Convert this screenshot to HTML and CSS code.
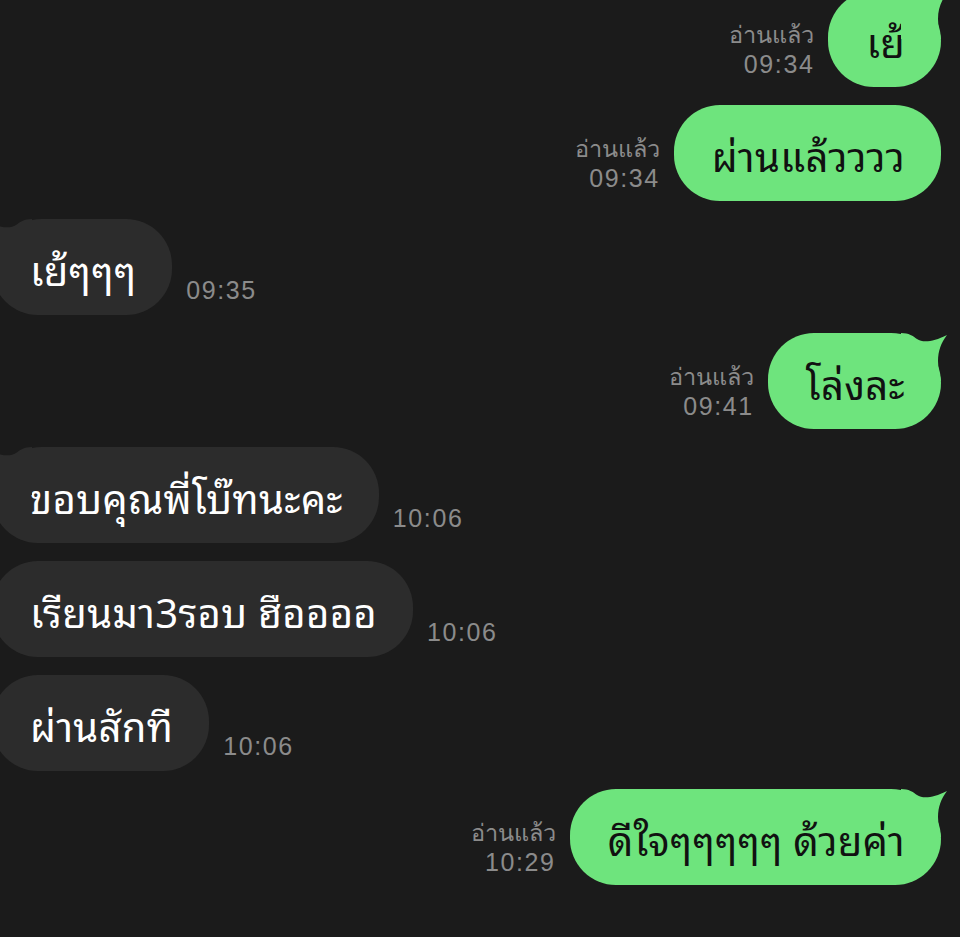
FILE: index.html
```html
<!DOCTYPE html>
<html lang="th">
<head>
<meta charset="utf-8">
<title>Chat</title>
<link rel="stylesheet" href="styles.css">
</head>
<body>
<div class="chat">
  <div class="row out first">
    <div class="meta"><span>อ่านแล้ว</span><span class="time">09:34</span></div>
    <div class="bubble tailed">เย้<svg class="tail" viewBox="0 0 48 48"><path d="M0,0 C8,0 12,3 16,6 C22,10 32,9 46,2 C40,10 37,18 37,28 C37,36 39,42 40,48 L0,48 Z"/></svg></div>
  </div>
  <div class="row out">
    <div class="meta"><span>อ่านแล้ว</span><span class="time">09:34</span></div>
    <div class="bubble">ผ่านแล้วววว</div>
  </div>
  <div class="row in">
    <div class="bubble tailed">เย้ๆๆๆ<svg class="tail" viewBox="0 0 48 48"><path d="M0,0 C8,0 12,3 16,6 C22,10 32,9 46,2 C40,10 37,18 37,28 C37,36 39,42 40,48 L0,48 Z"/></svg></div>
    <div class="meta"><span class="time">09:35</span></div>
  </div>
  <div class="row out">
    <div class="meta"><span>อ่านแล้ว</span><span class="time">09:41</span></div>
    <div class="bubble tailed">โล่งละ<svg class="tail" viewBox="0 0 48 48"><path d="M0,0 C8,0 12,3 16,6 C22,10 32,9 46,2 C40,10 37,18 37,28 C37,36 39,42 40,48 L0,48 Z"/></svg></div>
  </div>
  <div class="row in">
    <div class="bubble tailed">ขอบคุณพี่โบ๊ทนะคะ<svg class="tail" viewBox="0 0 48 48"><path d="M0,0 C8,0 12,3 16,6 C22,10 32,9 46,2 C40,10 37,18 37,28 C37,36 39,42 40,48 L0,48 Z"/></svg></div>
    <div class="meta"><span class="time">10:06</span></div>
  </div>
  <div class="row in">
    <div class="bubble">เรียนมา3รอบ ฮืออออ</div>
    <div class="meta"><span class="time">10:06</span></div>
  </div>
  <div class="row in">
    <div class="bubble">ผ่านสักที</div>
    <div class="meta"><span class="time">10:06</span></div>
  </div>
  <div class="row out">
    <div class="meta"><span>อ่านแล้ว</span><span class="time">10:29</span></div>
    <div class="bubble tailed">ดีใจๆๆๆๆๆ ด้วยค่า<svg class="tail" viewBox="0 0 48 48"><path d="M0,0 C8,0 12,3 16,6 C22,10 32,9 46,2 C40,10 37,18 37,28 C37,36 39,42 40,48 L0,48 Z"/></svg></div>
  </div>
</div>
</body>
</html>
```
FILE: styles.css
```css
html, body {
  margin: 0;
  padding: 0;
  background: #1b1b1b;
  height: 100%;
  overflow: hidden;
}
.chat {
  display: flex;
  flex-direction: column;
  gap: 18px;
  margin-top: -9px;
}
.row {
  display: flex;
  align-items: flex-end;
  gap: 14px;
}
.row.out {
  justify-content: flex-end;
  padding-right: 19px;
}
.row.in {
  justify-content: flex-start;
  margin-left: -8px;
}
.bubble {
  position: relative;
  height: 96px;
  display: flex;
  align-items: center;
  padding: 2px 36px 0 38px;
  box-sizing: border-box;
  border-radius: 46px;
  font-family: "Noto Sans Thai Looped", "Noto Sans Thai", "Noto Sans", sans-serif;
  font-size: 40px;
  letter-spacing: 0.3px;
  white-space: nowrap;
}
.out .bubble {
  background: #6ee47d;
  color: #111;
}
.in .bubble {
  background: #2c2c2c;
  color: #fff;
}
.out .bubble.tailed {
  border-top-right-radius: 50px;
}
.in .bubble.tailed {
  border-top-left-radius: 50px;
}
.tail {
  position: absolute;
  top: 0;
  width: 48px;
  height: 48px;
}
.out .tail {
  right: -8px;
  fill: #6ee47d;
}
.in .tail {
  left: -8px;
  fill: #2c2c2c;
  transform: scaleX(-1);
}
.meta {
  display: flex;
  flex-direction: column;
  font-family: "Liberation Sans", Arial, sans-serif;
  color: #8b8b8b;
  line-height: 29px;
  margin-bottom: 8px;
  font-size: 23.5px;
}
.out .meta {
  align-items: flex-end;
}
.time {
  font-size: 25px;
  letter-spacing: 1.6px;
}
.in .meta {
  margin-bottom: 10px;
}
```
